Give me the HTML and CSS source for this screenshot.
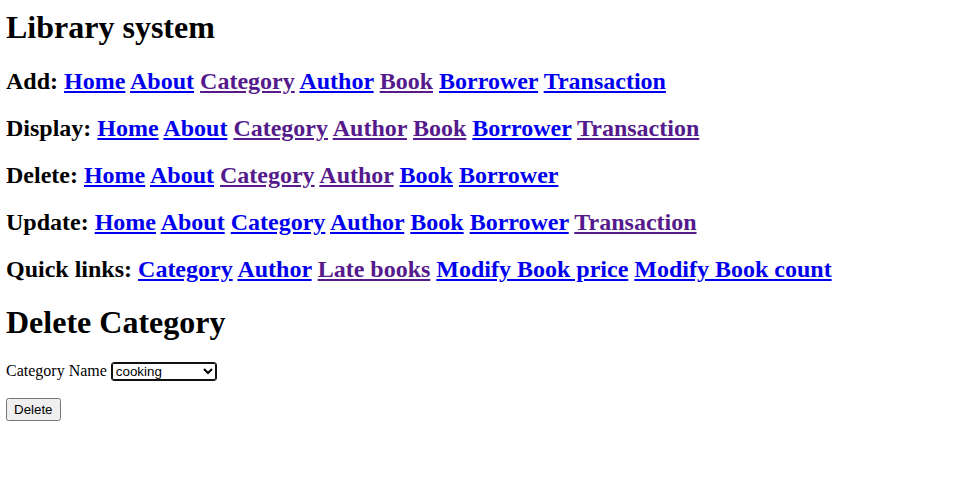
FILE: index.html
```html
<!DOCTYPE html>
<html>
<head>
<meta charset="utf-8">
<title>Library system</title>
<link rel="stylesheet" href="styles.css">
</head>
<body>
<h1 class="title">Library system</h1>
<h2 class="nav">Add: <a href="#" class="lnk">Home</a> <a href="#" class="lnk">About</a> <a href="#" class="lnk seen">Category</a> <a href="#" class="lnk">Author</a> <a href="#" class="lnk seen">Book</a> <a href="#" class="lnk">Borrower</a> <a href="#" class="lnk">Transaction</a></h2>
<h2 class="nav">Display: <a href="#" class="lnk">Home</a> <a href="#" class="lnk">About</a> <a href="#" class="lnk seen">Category</a> <a href="#" class="lnk seen">Author</a> <a href="#" class="lnk seen">Book</a> <a href="#" class="lnk">Borrower</a> <a href="#" class="lnk seen">Transaction</a></h2>
<h2 class="nav">Delete: <a href="#" class="lnk">Home</a> <a href="#" class="lnk">About</a> <a href="#" class="lnk seen">Category</a> <a href="#" class="lnk seen">Author</a> <a href="#" class="lnk">Book</a> <a href="#" class="lnk">Borrower</a></h2>
<h2 class="nav">Update: <a href="#" class="lnk">Home</a> <a href="#" class="lnk">About</a> <a href="#" class="lnk">Category</a> <a href="#" class="lnk">Author</a> <a href="#" class="lnk">Book</a> <a href="#" class="lnk">Borrower</a> <a href="#" class="lnk seen">Transaction</a></h2>
<h2 class="nav">Quick links: <a href="#" class="lnk">Category</a> <a href="#" class="lnk">Author</a> <a href="#" class="lnk seen">Late books</a> <a href="#" class="lnk">Modify Book price</a> <a href="#" class="lnk">Modify Book count</a></h2>
<h1 class="section">Delete Category</h1>
<form class="form">
<p class="row">Category Name <select class="sel"><option>cooking</option></select></p>
<p class="row row-btn"><button type="button" class="btn">Delete</button></p>
</form>
</body>
</html>
```
FILE: styles.css
```css
body {
  margin: 0 6px;
  font-family: "Liberation Serif", "Times New Roman", serif;
  font-size: 16px;
  color: #000;
  background: #fff;
}
.title {
  font-size: 32px;
  margin: 9px 0 22.44px;
}
.section {
  font-size: 32px;
  margin: 20.44px 0 21.44px;
}
.nav {
  font-size: 24px;
  margin: 19.92px 0;
}
.lnk {
  color: #0000ee;
  text-decoration: underline;
}
.lnk.seen {
  color: #551a8b;
}
.form {
  margin: 0;
}
.row {
  margin: 16px 0;
}
.row-btn {
  margin-top: 17px;
}
.sel {
  font-family: "Liberation Sans", Arial, sans-serif;
  font-size: 13.333px;
  width: 106px;
  border: 1px solid #101010;
  box-shadow: inset 0 0 0 1px #101010;
  border-radius: 3px;
  background: #fff;
  color: #000;
}
.btn {
  font-family: "Liberation Sans", Arial, sans-serif;
  font-size: 13.333px;
  padding: 2px 6px;
}
```
